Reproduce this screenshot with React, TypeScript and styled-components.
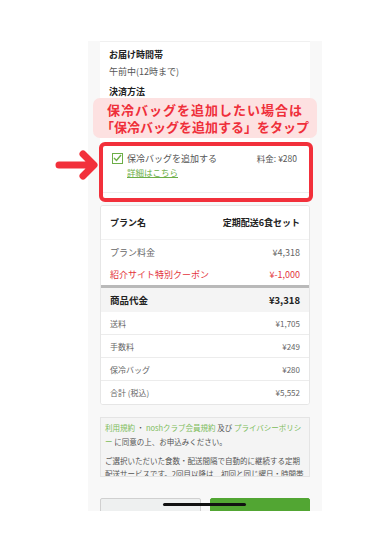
import styled, { createGlobalStyle } from "styled-components";

const GlobalStyle = createGlobalStyle`
  body {
    margin: 0;
    background: #ffffff;
    font-family: "Noto Sans CJK JP", "Noto Sans", sans-serif;
    color: #333;
  }
  * { box-sizing: border-box; }
`;

const Page = styled.div`
  position: relative;
  width: 390px;
  height: 550px;
  overflow: hidden;
  background: #ffffff;
  padding-top: 41px;
`;

const Screen = styled.div`
  margin-left: 88px;
  width: 234px;
  height: 470px;
  background: #f8f8f8;
  padding: 0 12px;
  overflow: hidden;
`;

const Card = styled.div`
  background: #ffffff;
  padding: 6px 0 0;
  border-top: 1px solid #f0f0f0;
`;

const Label = styled.div<{ gap?: number }>`
  padding-left: 9px;
  font-size: 9px;
  font-weight: 700;
  line-height: 14px;
  color: #222;
  margin-top: ${(p) => p.gap ?? 0}px;
`;

const Value = styled.div`
  padding-left: 9px;
  font-size: 9px;
  line-height: 16px;
  color: #555;
  margin-top: 2px;
`;

const Note = styled.div`
  margin: -1px -7px 0 -7px;
  padding: 3px 0;
  background: rgba(253, 222, 222, 0.92);
  border-radius: 7px;
  text-align: center;
  font-size: 13px;
  font-weight: 700;
  line-height: 17px;
  color: #ef2f3a;
  white-space: nowrap;
`;

const NoteLine = styled.div<{ spacing?: number }>`
  letter-spacing: ${(p) => p.spacing ?? 0}px;
`;

const Highlight = styled.div`
  margin: 4px -3px 0 -1px;
  border: 4px solid #f2303b;
  border-radius: 6px;
  background: #ffffff;
  padding: 5px 12px 0 9px;
`;

const OptionRow = styled.div`
  display: flex;
  align-items: center;
  height: 14px;
`;

const Check = styled.span`
  width: 11px;
  height: 11px;
  border: 1.5px solid #6cae47;
  display: inline-flex;
  align-items: center;
  justify-content: center;
  margin-right: 4px;
  background: #fff;
`;

const OptionText = styled.span`
  flex: 1;
  font-size: 9px;
  color: #555;
`;

const Fee = styled.span`
  font-size: 8.5px;
  color: #555;
`;

const DetailLink = styled.a`
  display: block;
  margin: 1px 0 0 15px;
  font-size: 8.5px;
  line-height: 12px;
  color: #6cae47;
  text-decoration: underline;
`;

const SectionEnd = styled.div`
  margin: 14px -12px 0 -9px;
  height: 6px;
  border-top: 1px solid #eeeeee;
`;

const Table = styled.div`
  margin-top: 3px;
  background: #ffffff;
  border: 1px solid #e6e6e6;
  border-radius: 3px;
  overflow: hidden;
`;

const Row = styled.div<{ h: number; tone?: "head" | "red" | "total" | "small"; line?: string }>`
  display: flex;
  justify-content: space-between;
  align-items: center;
  height: ${(p) => p.h}px;
  padding: 0 9px;
  font-size: ${(p) => (p.tone === "small" ? "8px" : p.tone === "total" ? "9.5px" : "9px")};
  font-weight: ${(p) => (p.tone === "head" || p.tone === "total" ? 700 : 400)};
  color: ${(p) =>
    p.tone === "red" ? "#e3343c" : p.tone === "head" || p.tone === "total" ? "#222" : "#666"};
  background: ${(p) => (p.tone === "total" ? "#f4f4f4" : "#ffffff")};
  border-bottom: ${(p) => p.line ?? "none"};
`;

const Terms = styled.div`
  margin-top: 12px;
  height: 60px;
  overflow: hidden;
  background: #f4f4f4;
  border: 1px solid #e4e4e4;
  padding: 3px 4px 0;
  font-size: 7.5px;
  line-height: 13.5px;
  color: #555;
`;

const TermsPara = styled.p<{ gap?: number }>`
  margin: ${(p) => p.gap ?? 0}px 0 0;
`;

const Green = styled.span`
  color: #7cbc5a;
`;

const Buttons = styled.div`
  display: grid;
  grid-template-columns: 1fr 1fr;
  gap: 9px;
  margin-top: 21px;
`;

const Button = styled.div<{ primary?: boolean }>`
  height: 40px;
  border-radius: 2px;
  background: ${(p) => (p.primary ? "#52a633" : "#eef0f0")};
  border: 1px solid ${(p) => (p.primary ? "#52a633" : "#d0d0d0")};
`;

const Arrow = styled.svg`
  position: absolute;
  left: 54px;
  top: 149px;
`;

const HomeBar = styled.div`
  position: absolute;
  left: 163px;
  top: 503px;
  width: 83px;
  height: 3px;
  border-radius: 2px;
  background: #111;
`;

export default function App() {
  return (
    <Page>
      <GlobalStyle />
      <Screen>
        <Card>
          <Label>お届け時間帯</Label>
          <Value>午前中(12時まで)</Value>
          <Label gap={5}>決済方法</Label>
          <Note>
            <NoteLine spacing={1}>保冷バッグを追加したい場合は</NoteLine>
            <NoteLine>「保冷バッグを追加する」をタップ</NoteLine>
          </Note>
          <Highlight>
            <OptionRow>
              <Check>
                <svg width="9" height="8" viewBox="0 0 9 8">
                  <path d="M1 4 L3.5 6.5 L8 1" fill="none" stroke="#6cae47" strokeWidth="1.4" />
                </svg>
              </Check>
              <OptionText>保冷バッグを追加する</OptionText>
              <Fee>料金: ¥280</Fee>
            </OptionRow>
            <DetailLink>詳細はこちら</DetailLink>
            <SectionEnd />
          </Highlight>
        </Card>

        <Table>
          <Row h={34} tone="head" line="1px solid #f2f2f2">
            <span>プラン名</span>
            <span>定期配送6食セット</span>
          </Row>
          <Row h={24}>
            <span>プラン料金</span>
            <span>¥4,318</span>
          </Row>
          <Row h={24} tone="red" line="3px solid #b9b9b9">
            <span>紹介サイト特別クーポン</span>
            <span>¥-1,000</span>
          </Row>
          <Row h={24} tone="total">
            <span>商品代金</span>
            <span>¥3,318</span>
          </Row>
          <Row h={23} tone="small" line="1px solid #ececec">
            <span>送料</span>
            <span>¥1,705</span>
          </Row>
          <Row h={23} tone="small" line="1px solid #ececec">
            <span>手数料</span>
            <span>¥249</span>
          </Row>
          <Row h={23} tone="small" line="1px solid #ececec">
            <span>保冷バッグ</span>
            <span>¥280</span>
          </Row>
          <Row h={23} tone="small">
            <span>合計 (税込)</span>
            <span>¥5,552</span>
          </Row>
        </Table>

        <Terms>
          <TermsPara>
            <Green>利用規約</Green> ・ <Green>noshクラブ会員規約</Green> 及び{" "}
            <Green>プライバシーポリシー</Green> に同意の上、お申込みください。
          </TermsPara>
          <TermsPara gap={5.5}>
            ご選択いただいた食数・配送間隔で自動的に継続する定期配送サービスです。2回目以降は、初回と同じ曜日・時間帯のお届けとなります。
          </TermsPara>
        </Terms>

        <Buttons>
          <Button />
          <Button primary />
        </Buttons>
      </Screen>

      <Arrow width="46" height="32" viewBox="0 0 46 32">
        <path
          d="M5 16 H39 M29 5 L40 16 L29 27"
          fill="none"
          stroke="#f2303b"
          strokeWidth="7"
          strokeLinecap="round"
          strokeLinejoin="round"
        />
      </Arrow>
      <HomeBar />
    </Page>
  );
}
